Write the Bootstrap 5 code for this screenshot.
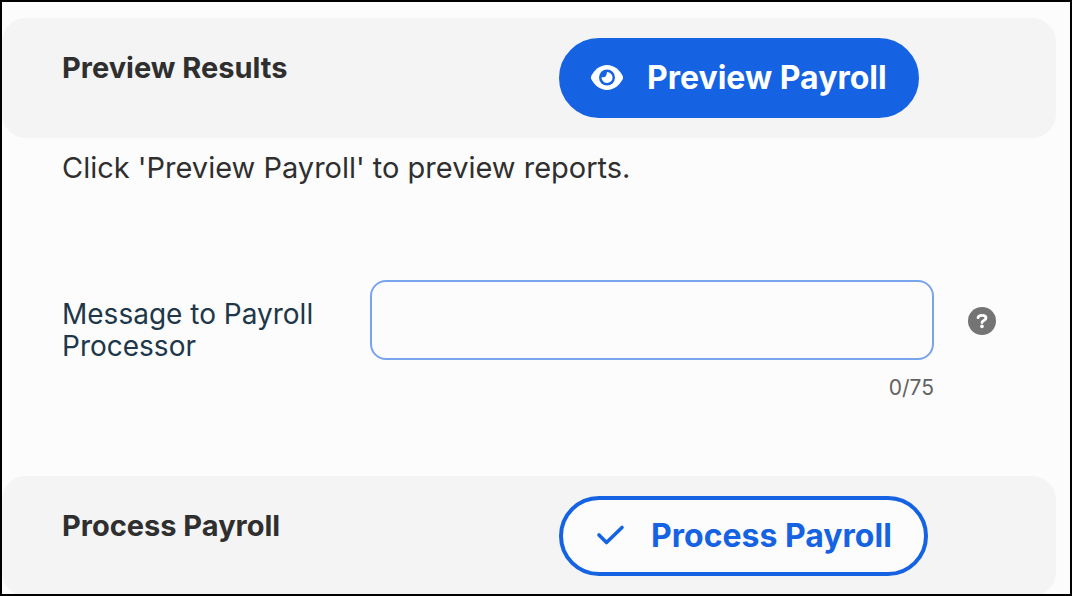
<!DOCTYPE html>
<html lang="en">
<head>
<meta charset="utf-8">
<meta name="viewport" content="width=device-width, initial-scale=1">
<title>Payroll</title>
<link href="https://cdn.jsdelivr.net/npm/bootstrap@5.3.0/dist/css/bootstrap.min.css" rel="stylesheet">
<style>
  body { font-family: Inter, "Liberation Sans", sans-serif; font-size: 28px; line-height: 32px; color: #2f2f2f; background: #fcfcfc; }
  .frame { border: 2px solid #000; overflow: hidden; padding: 16px 14px 0 0; height: 100vh; }
  .panel { background: #f4f4f4; border-radius: 24px; min-height: 120px; padding: 20px 0; }
  .lead-col { flex: 0 0 52.85%; padding-left: 60px; }
  .panel h2 { font-size: 29px; line-height: 32px; font-weight: 700; margin: 14px 0 0; }
  .action { --bs-btn-font-size: 32px; --bs-btn-line-height: 40px; --bs-btn-font-weight: 700; --bs-btn-border-width: 4px; --bs-btn-border-radius: 40px; --bs-btn-padding-y: 16px; --bs-btn-padding-x: 28px; gap: 24px; }
  .action-solid { --bs-btn-color: #fff; --bs-btn-bg: #1563e3; --bs-btn-border-color: #1563e3; --bs-btn-hover-color: #fff; --bs-btn-hover-bg: #1054c4; }
  .action-line { --bs-btn-padding-x: 32px; --bs-btn-color: #1563e3; --bs-btn-bg: #fcfcfc; --bs-btn-border-color: #1563e3; --bs-btn-hover-color: #1563e3; --bs-btn-hover-bg: #eaf1fd; }
  .intro { font-size: 29px; padding: 14px 0 0 60px; margin: 0; }
  .message { padding: 96px 60px 76px 60px; }
  .message label { flex: 0 0 308px; color: #20374a; margin-top: 18px; }
  .message .form-control { height: 80px; border: 2px solid #7aa3f0; border-radius: 16px; background: #fcfcfc; font-size: 28px; }
  .counter { font-size: 21px; line-height: 24px; color: #626262; margin-top: 16px; }
  .help { margin: 27px 0 0 34px; line-height: 0; }
</style>
</head>
<body>
<main class="frame">
  <section class="panel d-flex align-items-start">
    <div class="lead-col"><h2>Preview Results</h2></div>
    <button type="button" class="btn action action-solid d-flex align-items-center">
      <svg width="32" height="26" viewBox="0 0 32 26" aria-hidden="true"><path fill="currentColor" d="M16 0C9 0 3 5 0 11.500Q-.4 12.500 0 13.500C3 20 9 25 16 25S29 20 32 13.500Q32.400 12.500 32 11.500C29 5 23 0 16 0Z"/><circle cx="16" cy="12.500" r="8" fill="#1563e3"/><path fill="currentColor" d="M16 7A5.500 5.500 0 1 1 10.600 11.900Q15.500 13.500 16 7Z"/></svg>
      <span>Preview Payroll</span>
    </button>
  </section>
  <p class="intro">Click 'Preview Payroll' to preview reports.</p>
  <div class="message d-flex align-items-start">
    <label for="message">Message to Payroll<br>Processor</label>
    <div class="flex-grow-1">
      <input id="message" type="text" class="form-control" maxlength="75">
      <div class="counter text-end">0/75</div>
    </div>
    <button type="button" class="btn help p-0 border-0" aria-label="Help">
      <svg width="28" height="28" viewBox="0 0 28 28" aria-hidden="true"><circle cx="14" cy="14" r="14" fill="#747474"/><path d="M10 10.700C10.300 8.800 12 8.300 14 8.300C16.400 8.300 18 9.200 18 11C18 13.500 14 13.300 14 15.600" fill="none" stroke="#fff" stroke-width="2.800" stroke-linecap="round"/><circle cx="14" cy="19.400" r="1.800" fill="#fff"/></svg>
    </button>
  </div>
  <section class="panel d-flex align-items-start">
    <div class="lead-col"><h2>Process Payroll</h2></div>
    <button type="button" class="btn action action-line d-flex align-items-center">
      <svg width="32" height="26" viewBox="0 0 32 26" aria-hidden="true"><path d="M4 12L11.500 19.500L27 4.500" fill="none" stroke="currentColor" stroke-width="3.600" stroke-linecap="round" stroke-linejoin="round"/></svg>
      <span>Process Payroll</span>
    </button>
  </section>
</main>
<script src="https://cdn.jsdelivr.net/npm/bootstrap@5.3.0/dist/js/bootstrap.bundle.min.js"></script>
</body>
</html>
